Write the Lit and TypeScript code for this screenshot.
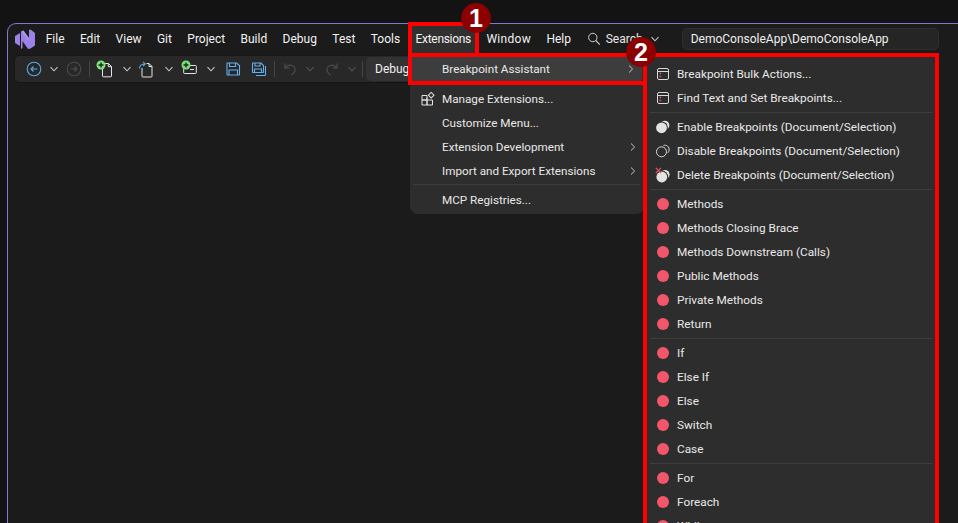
import { LitElement, html, css, svg } from "lit";
import { customElement } from "lit/decorators.js";

const chev = (on = true) => html`<svg class="chev ${on ? "" : "dim"}" width="10" height="10" viewBox="0 0 10 10"><path d="M1.5 3.2 5 6.8l3.5-3.6" fill="none" stroke="currentColor" stroke-width="1.1"/></svg>`;

const logo = html`<svg width="22" height="22" viewBox="0 0 22 22"><path fill="#9a82e6" d="M1 8 6 5v13l-5-3Z"/><path fill="#9a82e6" d="M7 3.5 9.5 2.5 15 10V2l1.5-.5L21 5v12.5L16.5 20.5 14 21l-5.500-8v7l-1.500 1Z"/><path fill="#b6a4f0" d="M7 3.5 9.500 2.500 15 10 15 13.500Z" opacity=".5"/></svg>`;

const plus = (x: number, y: number) => svg`<circle cx="${x}" cy="${y}" r="4.5" fill="#7de07a"/><path d="M${x - 2.5} ${y}h5M${x} ${y - 2.5}v5" stroke="#12301a" stroke-width="1.4"/>`;

const crescent = (cx: number, cy: number, bx: number, by: number) => svg`<circle cx="${bx}" cy="${by}" r="4.6" fill="#e2e2e2"/><circle cx="${cx}" cy="${cy}" r="6.4" fill="#2d2d2d"/><circle cx="${cx}" cy="${cy}" r="5.4" fill="#e2e2e2"/>`;

const ico = {
  back: html`<svg width="16" height="16" viewBox="0 0 16 16"><circle cx="8" cy="8" r="6.8" fill="none" stroke="#5aa9e6" stroke-width="1.1"/><path d="M11.500 8H5M7.500 5.500 5 8l2.500 2.500" fill="none" stroke="#5aa9e6" stroke-width="1.1"/></svg>`,
  fwd: html`<svg width="16" height="16" viewBox="0 0 16 16"><circle cx="8" cy="8" r="6.8" fill="none" stroke="#4c4c4c" stroke-width="1.1"/><path d="M4.500 8H11M8.500 5.500 11 8l-2.500 2.500" fill="none" stroke="#4c4c4c" stroke-width="1.1"/></svg>`,
  newProj: html`<svg width="18" height="18" viewBox="0 0 18 18"><path d="M6.500 3.500h6l3 3v9.500a.8.8 0 0 1-.8.8H7.300a.8.8 0 0 1-.8-.8Z M12.300 3.500v3.200h3.200" fill="none" stroke="#e6e6e6" stroke-width="1"/>${plus(5, 5)}</svg>`,
  open: html`<svg width="18" height="18" viewBox="0 0 18 18"><path d="M4 8v8.200a.8.8 0 0 0 .8.8h8.400a.8.8 0 0 0 .8-.8V6.500l-3-3H8.500M11 3.500v3h3" fill="none" stroke="#e6e6e6" stroke-width="1"/><path d="M1.500 8.500C1.500 5.500 3.500 4 7 4M5 1.800 7.300 4 5 6.200" fill="none" stroke="#5aa9e6" stroke-width="1.1"/></svg>`,
  add: html`<svg width="18" height="18" viewBox="0 0 18 18"><path d="M8 5.500h6.500a.8.8 0 0 1 .8.8v6.400a.8.8 0 0 1-.8.8h-11a.8.8 0 0 1-.8-.8V9M9 9.500h4" fill="none" stroke="#e6e6e6" stroke-width="1"/>${plus(5, 5)}</svg>`,
  save: html`<svg width="16" height="16" viewBox="0 0 16 16"><path d="M2 2.500a.5.500 0 0 1 .5-.5h9.200L14.500 4.800v8.700a.5.500 0 0 1-.5.500H2.500a.5.500 0 0 1-.5-.5ZM4.500 2v3.500h6V2M4 14V9h8.500v5" fill="none" stroke="#62b0ee" stroke-width="1.1"/></svg>`,
  saveAll: html`<svg width="16" height="16" viewBox="0 0 16 16"><path d="M1.500 2.500a.5.500 0 0 1 .5-.5h8L12.500 4.500V11a.5.500 0 0 1-.5.500H2a.5.500 0 0 1-.5-.5ZM4 2v3h5V2M3.500 11.500V8h7v3.500M14.500 5v8.500a1 1 0 0 1-1 1H5" fill="none" stroke="#62b0ee" stroke-width="1.1"/></svg>`,
  undo: html`<svg width="16" height="16" viewBox="0 0 16 16"><path d="M3 2.500V7h4.500M3.200 6.800C5 4.500 7 3.800 9 4.200c3 .6 4.500 3 4 5.500-.4 1.800-1.600 3.200-3.600 4.300" fill="none" stroke="#4f4f4f" stroke-width="1.1"/></svg>`,
  redo: html`<svg width="16" height="16" viewBox="0 0 16 16"><path d="M13 2.500V7H8.500M12.800 6.800C11 4.500 9 3.800 7 4.200c-3 .6-4.500 3-4 5.500.4 1.800 1.600 3.200 3.600 4.300" fill="none" stroke="#4f4f4f" stroke-width="1.1"/></svg>`,
  search: html`<svg width="14" height="14" viewBox="0 0 14 14"><circle cx="5.800" cy="5.500" r="4.200" fill="none" stroke="#d0d0d0" stroke-width="1"/><path d="M8.800 8.500 12.800 12.600" stroke="#d0d0d0" stroke-width="1.1"/></svg>`,
  grid: html`<svg width="14" height="14" viewBox="0 0 14 14"><path d="M1 3.500h5v4.500H1ZM1 8h5v5H1ZM6 8h5.500v5H6ZM6 5.500v2.500" fill="none" stroke="#e4e4e4" stroke-width="1"/><rect x="8.200" y="1.200" width="4" height="4" transform="rotate(45 10.200 3.200)" fill="none" stroke="#e4e4e4" stroke-width="1"/></svg>`,
  win: html`<svg width="14" height="14" viewBox="0 0 14 14"><rect x="1.500" y="1.500" width="11" height="11" rx="1.500" fill="none" stroke="#d8d8d8" stroke-width="1"/><path d="M1.500 4.500h11" stroke="#d8d8d8"/><path d="M3.500 6.500h1.600M3.500 9.500h1.600" stroke="#f0566a" stroke-width="1.600"/></svg>`,
  enable: html`<svg width="16" height="16" viewBox="0 0 16 16">${crescent(6.5, 8.8, 9.8, 6.3)}</svg>`,
  disable: html`<svg width="16" height="16" viewBox="0 0 16 16"><path d="M8.500 2.400c3-.8 6 1.400 5.600 4.800-.1 1-.6 2-1.300 2.600" fill="none" stroke="#d8d8d8"/><circle cx="6.500" cy="8.800" r="5" fill="none" stroke="#d8d8d8"/></svg>`,
  del: html`<svg width="16" height="16" viewBox="0 0 16 16">${crescent(6.8, 10, 10, 7.5)}<path d="M.8.8 6 6M6 .8.8 6" stroke="#e0505f" stroke-width="1.200"/></svg>`,
  dot: html`<svg width="14" height="14" viewBox="0 0 14 14"><circle cx="7" cy="7" r="6" fill="#f2566a"/></svg>`,
};

const arrow = html`<svg class="sub" width="8" height="10" viewBox="0 0 8 10"><path d="M2 1.500 5.600 5 2 8.500" fill="none" stroke="#c8c8c8" stroke-width="1"/></svg>`;

type Row = { t: string; i?: unknown; sub?: boolean } | null;

const submenu: Row[] = [
  { t: "Breakpoint Bulk Actions...", i: ico.win },
  { t: "Find Text and Set Breakpoints...", i: ico.win },
  null,
  { t: "Enable Breakpoints (Document/Selection)", i: ico.enable },
  { t: "Disable Breakpoints (Document/Selection)", i: ico.disable },
  { t: "Delete Breakpoints (Document/Selection)", i: ico.del },
  null,
  ...["Methods", "Methods Closing Brace", "Methods Downstream (Calls)", "Public Methods", "Private Methods", "Return"].map((t) => ({ t, i: ico.dot })),
  null,
  ...["If", "Else If", "Else", "Switch", "Case"].map((t) => ({ t, i: ico.dot })),
  null,
  ...["For", "Foreach", "While"].map((t) => ({ t, i: ico.dot })),
];

const extMenu: Row[] = [
  { t: "Manage Extensions...", i: ico.grid },
  { t: "Customize Menu..." },
  { t: "Extension Development", sub: true },
  { t: "Import and Export Extensions", sub: true },
  null,
  { t: "MCP Registries..." },
];

const renderRow = (r: Row) =>
  r === null
    ? html`<div class="sep"></div>`
    : html`<div class="row"><span class="ic">${r.i ?? ""}</span><span class="lbl">${r.t}</span>${r.sub ? arrow : ""}</div>`;

const menus = ["File", "Edit", "View", "Git", "Project", "Build", "Debug", "Test", "Tools", "Extensions", "Window", "Help"];

@customElement("app-root")
export class AppRoot extends LitElement {
  static styles = css`
    :host {
      display: block;
      position: relative;
      width: 958px;
      height: 523px;
      overflow: hidden;
      background: #131313;
      font-family: Roboto, "Noto Sans", sans-serif;
      font-size: 12px;
      color: #ececec;
    }
    svg { display: block; flex: none; }
    .page { padding: 23px 0 0 7px; height: 500px; }
    .window {
      height: 100%;
      box-sizing: border-box;
      background: #1b1b1b;
      border: 1px solid #8577cf;
      border-width: 1px 0 0 1px;
      border-top-left-radius: 9px;
      display: flex;
      flex-direction: column;
    }
    .bar { display: flex; align-items: center; height: 30px; padding-left: 6px; }
    .logo { width: 24px; }
    .menus { display: flex; align-items: center; }
    .m { padding: 0 7.7px; line-height: 28px; white-space: nowrap; color: #f2f2f2; }
    .m.active { background: #303030; border-radius: 4px 4px 0 0; letter-spacing: -0.3px; }
    .m.wide { letter-spacing: 0.3px; }
    .search { display: flex; align-items: center; gap: 5px; margin-left: 8px; width: 87px; color: #e8e8e8; }
    .search .chev { margin-left: 2px; }
    .title {
      margin-left: 8px;
      width: 257px;
      height: 22px;
      box-sizing: border-box;
      padding-left: 8px;
      background: #252525;
      border: 1px solid #2f2f2f;
      border-radius: 5px;
      line-height: 20px;
      color: #f0f0f0;
      white-space: nowrap;
    }
    .toolbar {
      display: flex;
      align-items: center;
      box-sizing: border-box;
      height: 28px;
      margin: 1px 19px 0 6px;
      padding-left: 11px;
      background: #282828;
      border: 1px solid #151515;
      border-radius: 5px;
    }
    .chev { color: #c6c6c6; }
    .chev.dim { color: #565656; }
    .t { display: flex; align-items: center; }
    .vsep { width: 1px; height: 16px; background: #444; }
    .combo { margin-left: 3px; width: 120px; height: 24px; line-height: 24px; padding-left: 9px; background: #333; border-radius: 5px; color: #efefef; }

    .menu {
      position: absolute;
      background: #2d2d2d;
      display: flex;
      flex-direction: column;
      box-sizing: border-box;
      font-size: 11.7px;
    }
    .ext { left: 410px; top: 84px; width: 234px; height: 130px; padding-top: 3px; border-radius: 0 0 8px 8px; }
    .hover {
      position: absolute;
      left: 410px; top: 54px; width: 234px; height: 30px;
      background: #2d2d2d;
      border-radius: 6px 6px 0 0;
      display: flex; align-items: center;
      font-size: 11.7px;
    }
    .hover .row { flex: 1; height: 26px; margin: 0 2px 0 0; background: #3d3d3d; border-radius: 4px; }
    .subm { left: 647px; top: 56px; width: 289px; height: 480px; padding-top: 6px; border-radius: 6px; font-size: 11.8px; }
    .row { display: flex; align-items: center; height: 24px; white-space: nowrap; color: #e9e9e9; flex: none; }
    .ic { width: 32px; padding-left: 3px; box-sizing: border-box; display: flex; justify-content: center; flex: none; }
    .lbl { flex: 1; }
    .sub { margin-right: 7px; }
    .sep { height: 1px; background: #3d3d3d; margin: 1px 4px 3px 3px; flex: none; }
    .subm .ic { width: 30px; padding-left: 2px; }
    .subm .sep { margin: 2px 3px 2px 3px; }

    .red { position: absolute; box-sizing: border-box; border: 4px solid #f00; pointer-events: none; }
    .r1 { left: 408px; top: 22px; width: 71px; height: 35px; border-bottom-width: 0; }
    .r2 { left: 408px; top: 53px; width: 239px; height: 32px; }
    .r3 { left: 643px; top: 53px; width: 296px; height: 490px; }
    .badge {
      position: absolute;
      width: 30px; height: 30px;
      border-radius: 50%;
      background: #8b0000;
      color: #fff;
      font-family: "Liberation Sans", sans-serif;
      font-weight: 700;
      font-size: 25px;
      line-height: 30px;
      text-align: center;
    }
    .b1 { left: 461px; top: 3px; }
    .b2 { left: 626px; top: 37px; }
    .ml5 { margin-left: 5px; }
    .ml6 { margin-left: 6px; }
    .ml7 { margin-left: 7px; }
    .ml8 { margin-left: 8px; }
    .ml9 { margin-left: 9px; }
    .ml10 { margin-left: 10px; }
  `;

  render() {
    return html`
      <div class="page">
        <div class="window">
          <div class="bar">
            <div class="logo">${logo}</div>
            <div class="menus">${menus.map((m) => html`<span class="m ${m === "Extensions" ? "active" : m === "Window" ? "wide" : ""}">${m}</span>`)}</div>
            <div class="search">${ico.search}<span>Search</span>${chev()}</div>
            <div class="title">DemoConsoleApp\\DemoConsoleApp</div>
          </div>
          <div class="toolbar">
            <span class="t">${ico.back}</span>
            <span class="t ml7">${chev()}</span>
            <span class="t ml7">${ico.fwd}</span>
            <span class="vsep ml7"></span>
            <span class="t ml6">${ico.newProj}</span>
            <span class="t ml8">${chev()}</span>
            <span class="t ml6">${ico.open}</span>
            <span class="t ml8">${chev()}</span>
            <span class="t ml7">${ico.add}</span>
            <span class="t ml7">${chev()}</span>
            <span class="t ml9">${ico.save}</span>
            <span class="t ml10">${ico.saveAll}</span>
            <span class="vsep ml7"></span>
            <span class="t ml7">${ico.undo}</span>
            <span class="t ml7">${chev(false)}</span>
            <span class="t ml9">${ico.redo}</span>
            <span class="t ml7">${chev(false)}</span>
            <span class="vsep ml5"></span>
            <div class="combo">Debug</div>
          </div>
        </div>
      </div>
      <div class="hover">${renderRow({ t: "Breakpoint Assistant", sub: true })}</div>
      <div class="menu ext">${extMenu.map(renderRow)}</div>
      <div class="menu subm">${submenu.map(renderRow)}</div>
      <div class="red r1"></div>
      <div class="red r2"></div>
      <div class="red r3"></div>
      <div class="badge b1">1</div>
      <div class="badge b2">2</div>
    `;
  }
}
